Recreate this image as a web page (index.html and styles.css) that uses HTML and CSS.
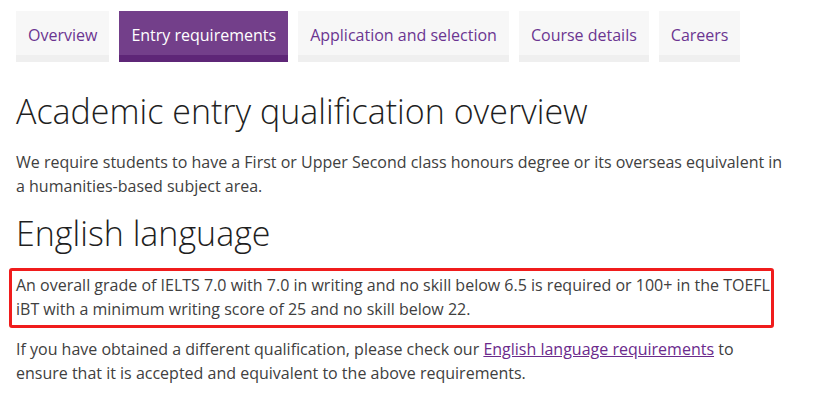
FILE: index.html
```html
<!DOCTYPE html>
<html lang="en">
<head>
<meta charset="utf-8">
<link rel="stylesheet" href="styles.css">
</head>
<body>
<nav class="tabs">
  <a class="tab" href="#">Overview</a>
  <a class="tab active" href="#">Entry requirements</a>
  <a class="tab" href="#">Application and selection</a>
  <a class="tab" href="#">Course details</a>
  <a class="tab" href="#">Careers</a>
</nav>
<main class="content">
  <h1 class="title">Academic entry qualification overview</h1>
  <p class="text">We require students to have a First or Upper Second class honours degree or its overseas equivalent in a humanities-based subject area.</p>
  <h2 class="title">English language</h2>
  <div class="highlight">
    <p class="text">An overall grade of IELTS 7.0 with 7.0 in writing and no skill below 6.5 is required or 100+ in the TOEFL iBT with a minimum writing score of 25 and no skill below 22.</p>
  </div>
  <p class="text">If you have obtained a different qualification, please check our <a class="link" href="#">English language requirements</a> to ensure that it is accepted and equivalent to the above requirements.</p>
</main>
</body>
</html>
```
FILE: styles.css
```css
html, body {
  margin: 0;
  padding: 0;
  background: #fff;
}
body {
  font-family: "Open Sans", "Liberation Sans", sans-serif;
  color: #404040;
  padding: 11px 16px 0 16px;
}
.tabs {
  display: flex;
  gap: 10px;
}
.tab {
  display: block;
  height: 40px;
  padding: 4px 12px 0 12px;
  line-height: 40px;
  font-size: 16px;
  color: #6b3591;
  text-decoration: none;
  background: #f7f7f7;
  border-bottom: 7px solid #efefef;
}
.tab.active {
  background: #733f8a;
  border-bottom-color: #5e2677;
  color: #fff;
}
.content {
  width: 770px;
}
.title {
  font-weight: 300;
  font-size: 34px;
  line-height: 44px;
  color: #1f1f1f;
  margin: 0;
}
h1.title {
  margin-top: 27px;
  margin-bottom: 17px;
}
h2.title {
  margin-top: 13px;
  margin-bottom: 13px;
}
.text {
  font-size: 16px;
  line-height: 24px;
  margin: 0;
}
.highlight {
  box-sizing: border-box;
  border: 3px solid #f01c1c;
  border-radius: 3px;
  margin: 0 0 9px -7px;
  padding: 2px 0 4px 4px;
  width: 765px;
}
.link {
  color: #6b2a8c;
  text-decoration: underline;
}
```
